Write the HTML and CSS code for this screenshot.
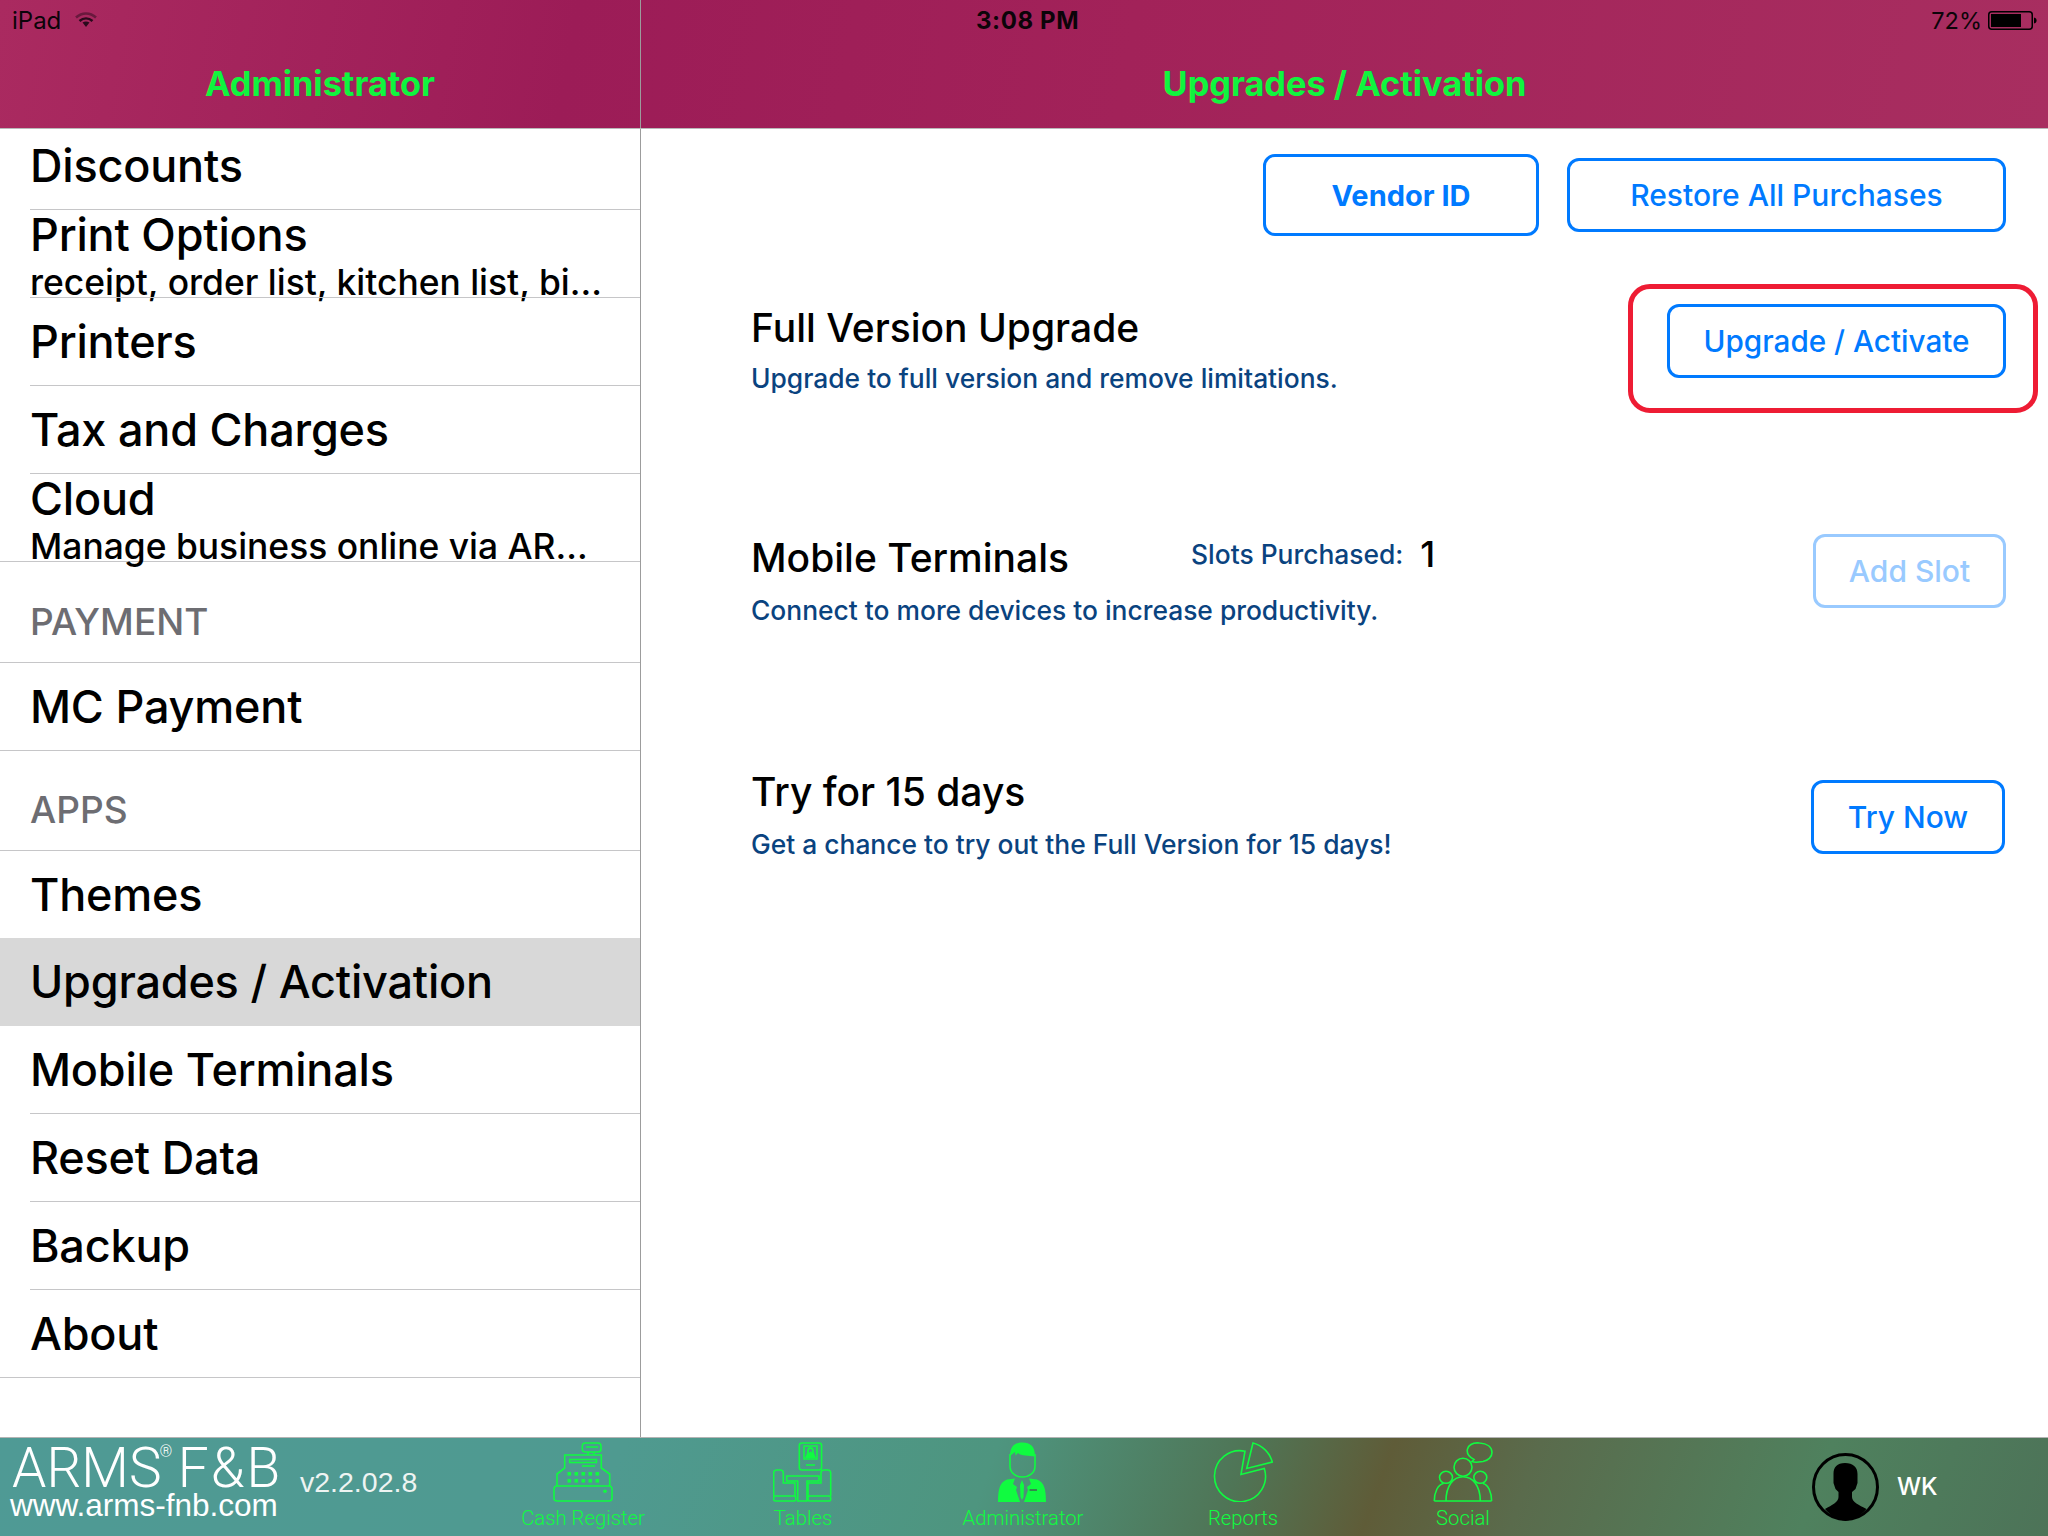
FILE: index.html
```html
<!DOCTYPE html>
<html>
<head>
  <title>ARMS F&amp;B - Upgrades / Activation</title>
  <link rel="stylesheet" href="styles.css">
</head>
<body>
  <div class="app">
    <header class="topbar">
      <div class="top-left">
        <div class="status">
          <span>iPad</span>
          <svg class="wifi" viewBox="0 0 22 18">
            <path class="wifi-outer" d="M1 6.500C7 1 15 1 21 6.500" />
            <path d="M4.500 10C8.500 6.500 13.500 6.500 17.500 10" />
            <path class="wifi-dot" d="M7.500 11.500C9.500 10 12.500 10 14.500 11.500L11 16Z" />
          </svg>
        </div>
        <h1 class="page-title">Administrator</h1>
      </div>
      <div class="top-right">
        <div class="status status-right">
          <span class="clock">3:08 PM</span>
          <span class="charge">72%</span>
          <svg class="battery" viewBox="0 0 49 19">
            <rect class="battery-shell" x="0.750" y="0.750" width="43.500" height="17.500" rx="3" />
            <rect x="3" y="3" width="30" height="13" />
            <path d="M46 6.500c1.800.4 2.600 1.500 2.600 3s-.8 2.600-2.600 3z" />
          </svg>
        </div>
        <h1 class="page-title">Upgrades / Activation</h1>
      </div>
    </header>

    <div class="body">
      <nav class="sidebar">
        <ul class="menu">
          <li class="row inset">Discounts</li>
          <li class="row inset two-line">
            <span>Print Options</span>
            <small>receipt, order list, kitchen list, bi...</small>
          </li>
          <li class="row inset">Printers</li>
          <li class="row inset">Tax and Charges</li>
          <li class="row two-line">
            <span>Cloud</span>
            <small>Manage business online via AR...</small>
          </li>
          <li class="section-label">PAYMENT</li>
          <li class="row">MC Payment</li>
          <li class="section-label">APPS</li>
          <li class="row no-line short">Themes</li>
          <li class="row no-line selected">Upgrades / Activation</li>
          <li class="row inset">Mobile Terminals</li>
          <li class="row inset">Reset Data</li>
          <li class="row inset">Backup</li>
          <li class="row">About</li>
        </ul>
      </nav>

      <main class="content">
        <div class="actions">
          <button class="btn btn-vendor">Vendor ID</button>
          <button class="btn btn-restore">Restore All Purchases</button>
        </div>

        <div class="features">
          <section class="feature">
            <div>
              <h2>Full Version Upgrade</h2>
              <p>Upgrade to full version and remove limitations.</p>
            </div>
            <div class="highlighted">
              <button class="btn btn-upgrade">Upgrade / Activate</button>
              <div class="red-box"></div>
            </div>
          </section>

          <section class="feature">
            <div>
              <div class="title-row">
                <h2>Mobile Terminals</h2>
                <div class="slots">Slots Purchased:<b>1</b></div>
              </div>
              <p class="low">Connect to more devices to increase productivity.</p>
            </div>
            <button class="btn btn-slot" disabled>Add Slot</button>
          </section>

          <section class="feature">
            <div>
              <h2>Try for 15 days</h2>
              <p class="low">Get a chance to try out the Full Version for 15 days!</p>
            </div>
            <button class="btn btn-try">Try Now</button>
          </section>
        </div>
      </main>
    </div>

    <footer class="tabbar">
      <div class="brand">
        <div class="logo">
          <div class="logo-name">ARMS<sup>®</sup> <span class="logo-tail">F&amp;B</span></div>
          <div class="logo-url">www.arms-fnb.com</div>
        </div>
        <div class="version">v2.2.02.8</div>
      </div>

      <div class="tabs">
        <div class="tab">
          <svg viewBox="0 0 60 60">
            <rect x="29.300" y="1" width="18.700" height="9" rx="3" />
            <path d="M33 5H45M35 10V13M41 10V13" />
            <path d="M4 44V32L11.700 26V13H48.300V26L56.700 32V44" />
            <rect x="1" y="44" width="58" height="15" rx="3" />
            <rect x="16.700" y="17.500" width="26.700" height="3" />
            <path d="M29 24H42" />
            <g class="solid">
              <rect x="14.500" y="30" width="3.600" height="3.600" />
              <rect x="21.500" y="30" width="3.600" height="3.600" />
              <rect x="28.500" y="30" width="3.600" height="3.600" />
              <rect x="35.500" y="30" width="3.600" height="3.600" />
              <rect x="42.500" y="30" width="3.600" height="3.600" />
              <rect x="14.500" y="37" width="3.600" height="3.600" />
              <rect x="21.500" y="37" width="3.600" height="3.600" />
              <rect x="28.500" y="37" width="3.600" height="3.600" />
              <rect x="35.500" y="37" width="3.600" height="3.600" />
              <rect x="42.500" y="37" width="3.600" height="3.600" />
              <circle cx="52" cy="49.300" r="1.800" />
            </g>
          </svg>
          <span>Cash Register</span>
        </div>
        <div class="tab">
          <svg viewBox="0 0 60 60">
            <rect x="26.300" y="1" width="22.300" height="27" rx="2.500" />
            <path d="M31 4H44V17H31Z" />
            <path class="solid" d="M37.500 5C34.500 5 34 8 34 11L32 16H43L41 11C41 8 40.500 5 37.500 5ZM37.500 7C39 7 39.500 9 39 11L38 9L36 11C35.500 9 36 7 37.500 7Z" />
            <path d="M33 23H42" />
            <path d="M0.700 54V31Q0.700 28 3.700 28H7.300Q10.300 28 10.300 31V41H22V54" />
            <path d="M57.700 54V31Q57.700 28 54.700 28H51Q48 28 48 31V41H35V54" />
            <rect x="0.700" y="54" width="22" height="5" rx="1.500" />
            <rect x="35" y="54" width="22.700" height="5" rx="1.500" />
            <path d="M13.700 34H46V39H34V59H24.700V39H13.700Z" />
          </svg>
          <span>Tables</span>
        </div>
        <div class="tab">
          <svg viewBox="0 0 60 60">
            <path d="M17 12V24C17 31 23 35 29.500 35C36 35 42 31 42 24V12" />
            <path class="solid" d="M17 14C17 4 22 .5 29.500 .5C37 .5 42 4 42 14V14.500C36 13.500 28 14 25 11L22.500 13.500L22 10Z" />
            <path class="solid" d="M5 60C5 47 7 40 14 37.500L22 36.500L20 42L24 45L23 48L27 60Z" />
            <path class="solid" d="M53 60C53 47 51 40 44 37.500L36 36.500L38 42L34 45L35 48L31 60Z" />
            <path class="solid" d="M29 38L31 43L30.500 55L29 58L27.500 55L27 43Z" />
            <path class="pocket" d="M36.500 48H44" />
          </svg>
          <span>Administrator</span>
        </div>
        <div class="tab">
          <svg viewBox="0 0 60 60">
            <path d="M28 32.500L32 9.200A25.500 25.500 0 1 0 51.300 26.500Z" />
            <path d="M33.700 26.500L40 1A27 27 0 0 1 59.300 20Z" />
          </svg>
          <span>Reports</span>
        </div>
        <div class="tab">
          <svg viewBox="0 0 60 60">
            <path d="M39 19.500L41 17.500C36 15 33.500 11 34.500 7C36 2.500 41 .5 46.500 1C54 1.500 59 5 59 10.500C59 15 55 18.500 50 19.500C46 20 42.500 21 39 19.500Z" />
            <ellipse cx="30" cy="25.300" rx="9" ry="9" />
            <ellipse cx="13" cy="35.300" rx="6.500" ry="6" />
            <ellipse cx="47.300" cy="35.300" rx="6.500" ry="6" />
            <path d="M13 59C13 44 20 34.700 30 34.700C40 34.700 47.300 44 47.300 59" />
            <path d="M1.300 59C1.300 50 5 42.500 10.500 41.500M58.600 59C58.600 50 55 42.500 50 41.500M1.300 59H58.600" />
          </svg>
          <span>Social</span>
        </div>
      </div>

      <div class="user">
        <svg class="avatar" viewBox="0 0 67 68">
          <ellipse class="avatar-ring" cx="33.500" cy="34" rx="32" ry="32.500" />
          <path d="M33 10C25 10 21.500 14 21.500 21V30L23.500 36L26.500 39V44C26.500 49 20 52 13 56C19 63 26 67.500 33.500 67.500C41 67.500 48.500 63 54.500 56C47 52 40 49 40 44V39L43.500 36L45.500 30V21C45.500 14 41 10 33 10Z" />
        </svg>
        <span>WK</span>
      </div>
    </footer>
  </div>
</body>
</html>
```

FILE: styles.css
```css
* {
  box-sizing: border-box;
}

body {
  margin: 0;
  background-color: #fff;
  font-family: Inter, "Liberation Sans", sans-serif;
  color: #000;
}

.app {
  width: 2048px;
  height: 1536px;
  display: flex;
  flex-direction: column;
  overflow: hidden;
}

/* Top bar */
.topbar {
  height: 129px;
  display: flex;
  background: linear-gradient(100deg, #aa2a60 0%, #9c1c57 28%, #a22259 55%, #a82e60 100%);
  border-bottom: 1px solid #b9b9b9;
}

.top-left {
  width: 641px;
  border-right: 1px solid #9c9c9c;
}

.top-right {
  flex: 1;
}

.status {
  height: 40px;
  display: flex;
  align-items: center;
  gap: 14px;
  padding-left: 12px;
  font-size: 24px;
  color: #0c0409;
}

.wifi {
  width: 22px;
  height: 18px;
  fill: none;
  stroke: #2a0a1c;
  stroke-width: 2.500;
}

.wifi-outer {
  opacity: 0.5;
}

.wifi-dot {
  fill: #2a0a1c;
  stroke: none;
}

.status-right {
  gap: 0;
  padding-left: 335px;
}

.clock {
  font-weight: 700;
  letter-spacing: 0.6px;
}

.charge {
  margin-left: auto;
  margin-right: 6px;
  font-size: 23.500px;
}

.battery {
  width: 49px;
  height: 19px;
  margin-right: 11px;
  fill: #000;
}

.battery-shell {
  fill: none;
  stroke: #000;
  stroke-width: 1.500;
}

.page-title {
  margin: 0;
  height: 88px;
  padding-top: 2px;
  line-height: 84px;
  text-align: center;
  font-size: 34.300px;
  font-weight: 700;
  color: #10f53e;
}

/* Sidebar */
.body {
  flex: 1;
  display: flex;
  min-height: 0;
}

.sidebar {
  width: 641px;
  border-right: 1px solid #9c9c9c;
  overflow: hidden;
}

.menu {
  list-style: none;
  margin: -7px 0 0;
  padding: 0;
}

.row {
  position: relative;
  height: 88px;
  padding-left: 30px;
  font-size: 45px;
  font-weight: 500;
  line-height: 87px;
  letter-spacing: -0.2px;
  border-bottom: 1px solid #c6c6c8;
}

.row.inset {
  border-bottom: 0;
}

.row.inset::after {
  content: "";
  position: absolute;
  left: 30px;
  right: 0;
  bottom: 0;
  height: 1px;
  background-color: #c6c6c8;
}

.row.no-line {
  border-bottom: 0;
}

.row.short {
  height: 87px;
}

.row.selected {
  background-color: #d8d8d8;
}

.two-line {
  line-height: 49px;
}

.two-line span,
.two-line small {
  display: block;
}

.two-line small {
  margin-top: 2px;
  font-size: 35.400px;
  line-height: 44px;
  letter-spacing: 0;
  white-space: nowrap;
}

.section-label {
  height: 100.500px;
  display: flex;
  align-items: flex-end;
  padding: 0 0 22px 30px;
  font-size: 37px;
  line-height: 36px;
  font-weight: 500;
  color: #6d6d72;
  border-bottom: 1px solid #c6c6c8;
}

/* Main pane */
.content {
  flex: 1;
  min-width: 0;
  padding: 25px 42px 0 110px;
}

.actions {
  display: flex;
  justify-content: flex-end;
  align-items: center;
  gap: 28px;
}

.btn {
  border: 3px solid #007aff;
  border-radius: 12px;
  background-color: #fff;
  font-family: inherit;
  font-size: 30px;
  font-weight: 500;
  color: #007aff;
  padding: 0;
}

.btn-vendor {
  width: 276px;
  height: 82px;
  font-size: 29px;
  font-weight: 700;
}

.btn-restore {
  width: 439px;
  height: 74px;
}

.btn-upgrade {
  width: 339px;
  height: 74px;
  font-size: 29.700px;
}

.btn-slot {
  width: 193px;
  height: 74px;
  border-color: #99caff;
  color: #99caff;
}

.btn-try {
  width: 194px;
  height: 74px;
  margin: 12px 1px 0 0;
}

.features {
  display: grid;
  grid-template-rows: 230px 234px auto;
  margin-top: 68px;
}

.feature {
  display: flex;
  justify-content: space-between;
  align-items: flex-start;
}

.feature h2 {
  margin: 0;
  font-size: 39px;
  line-height: 48px;
  font-weight: 500;
}

.feature p {
  margin: 6px 0 0;
  font-size: 26.400px;
  line-height: 40px;
  font-weight: 500;
  color: #0a437f;
}

.feature p.low {
  margin-top: 8px;
}

.title-row {
  display: flex;
}

.title-row h2 {
  width: 440px;
}

.slots {
  display: flex;
  font-size: 26.400px;
  line-height: 40px;
  font-weight: 500;
  color: #0a437f;
}

.slots b {
  margin-left: 17px;
  font-size: 36px;
  font-weight: 500;
  color: #000;
}

.highlighted {
  position: relative;
}

.red-box {
  position: absolute;
  left: -39px;
  right: -32px;
  top: -20px;
  bottom: -35px;
  border: 5px solid #ee1c34;
  border-radius: 22px;
}

/* Bottom tab bar */
.tabbar {
  height: 99px;
  display: flex;
  background: linear-gradient(110deg, #4f9a95 0%, #4f9a90 30%, #4e957f 48%, #4f7556 60%, #5f5c38 67%, #5a6b4c 74%, #4f815e 88%, #4d7358 100%);
  border-top: 1px solid #b4b4b4;
}

.brand {
  width: 473px;
  display: flex;
  padding-left: 10px;
  color: #fff;
}

.logo {
  width: 268px;
}

.logo-name {
  margin: 8px 0 0 2px;
  font-family: Roboto, "Liberation Sans", sans-serif;
  font-weight: 300;
  font-size: 55px;
  line-height: 44px;
  word-spacing: -8px;
  white-space: nowrap;
}

.logo-name sup {
  font-size: 16px;
  line-height: 0;
  vertical-align: 30px;
  margin-left: -2px;
}

.logo-tail {
  letter-spacing: 2px;
}

.logo-url {
  font-family: "Liberation Sans", sans-serif;
  font-size: 31.500px;
  line-height: 30px;
}

.version {
  margin: 26px 0 0 22px;
  font-family: "Liberation Sans", sans-serif;
  font-size: 28.500px;
  line-height: 36px;
  color: #eef4f2;
}

.tabs {
  display: flex;
}

.tab {
  width: 220px;
  display: flex;
  flex-direction: column;
  align-items: center;
  padding-top: 4px;
  font-family: Roboto, "Liberation Sans", sans-serif;
  font-weight: 300;
  font-size: 20.300px;
  line-height: 24px;
  color: #10fb40;
}

.tab svg {
  width: 60px;
  height: 60px;
  margin-bottom: 4px;
  fill: none;
  stroke: #10fb40;
  stroke-width: 1.600;
}

.tab svg .solid {
  fill: #10fb40;
  stroke: none;
}

.tab svg .pocket {
  stroke: #3f6b50;
}

.user {
  margin-left: 239px;
  display: flex;
  align-items: center;
  gap: 18px;
  padding-bottom: 1px;
  font-size: 24px;
  font-weight: 500;
  color: #fff;
}

.avatar {
  width: 67px;
  height: 68px;
  fill: #000;
}

.avatar-ring {
  fill: none;
  stroke: #000;
  stroke-width: 3;
}
```
